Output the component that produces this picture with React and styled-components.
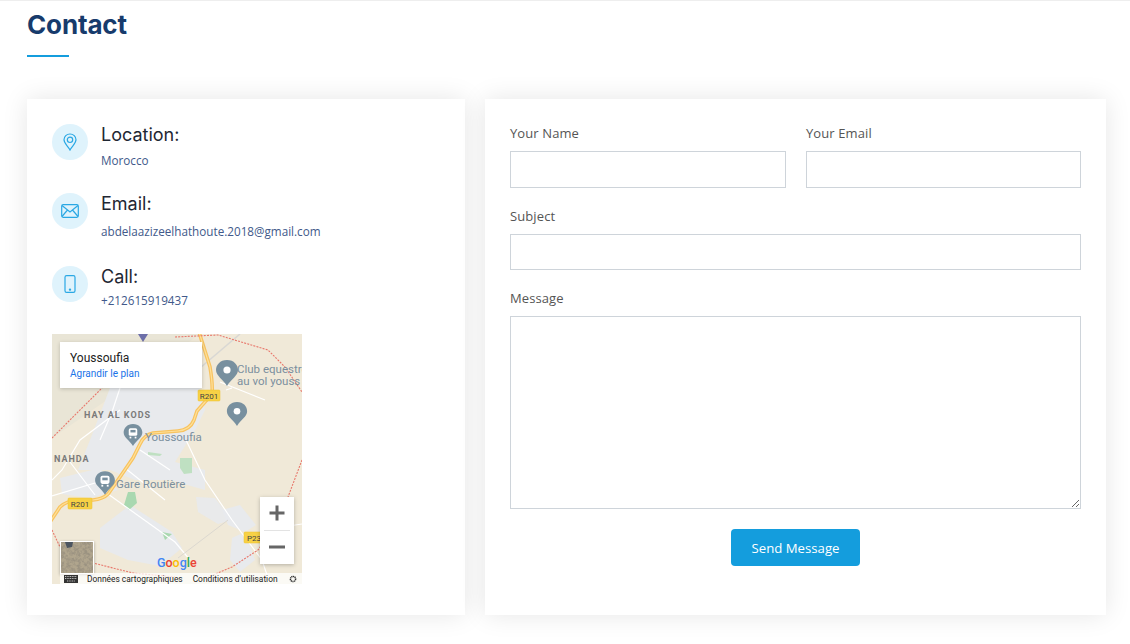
import React from 'react';
import styled, { createGlobalStyle } from 'styled-components';

const GlobalStyle = createGlobalStyle`
  html, body {
    margin: 0;
    padding: 0;
    background: #fff;
    font-family: 'Open Sans', sans-serif;
  }
  * { box-sizing: border-box; }
`;

const Page = styled.section`
  width: 1130px;
  height: 644px;
  overflow: hidden;
  border-top: 1px solid #eee;
  padding: 0 24px 0 27px;
`;

const Title = styled.h2`
  margin: 0;
  padding-top: 7px;
  font-family: 'Inter', sans-serif;
  font-weight: 700;
  font-size: 26px;
  line-height: 34px;
  letter-spacing: -0.15px;
  color: #173b6c;
`;

const Underline = styled.div`
  width: 42px;
  height: 2px;
  margin-top: 13px;
  background: #149ddd;
`;

const Columns = styled.div`
  display: grid;
  grid-template-columns: 438px 621px;
  gap: 20px;
  margin-top: 42px;
`;

const Card = styled.div`
  height: 516px;
  background: #fff;
  box-shadow: 0 0 24px rgba(0, 0, 0, 0.1);
  padding: 25px;
`;

const InfoRow = styled.div`
  display: flex;
  gap: 13px;
  height: ${(props) => props.$height}px;
`;

const IconCircle = styled.div`
  width: 36px;
  height: 36px;
  flex: none;
  border-radius: 50%;
  background: #dff3fc;
  color: #2aa8e4;
  display: flex;
  align-items: center;
  justify-content: center;
`;

const InfoTitle = styled.h4`
  margin: 0;
  font-family: 'Inter', sans-serif;
  font-weight: 400;
  font-size: 18px;
  line-height: 22px;
  color: #1f2733;
`;

const InfoText = styled.p`
  margin: ${(props) => props.$gap}px 0 0;
  font-size: 11.7px;
  line-height: 16px;
  color: #41598a;
`;

const MapFrame = styled.div`
  position: relative;
  width: 250px;
  height: 250px;
  margin-top: -1px;
  overflow: hidden;
  background: #f0e9d8;
  font-family: 'Roboto', sans-serif;
`;

const MapCanvas = styled.svg`
  display: block;
  width: 250px;
  height: 250px;
`;

const MapCard = styled.div`
  position: absolute;
  left: 8px;
  top: 8px;
  width: 142px;
  height: 46px;
  padding: 9px 10px;
  background: #fff;
  box-shadow: 0 1px 4px rgba(0, 0, 0, 0.2);
`;

const MapCardTitle = styled.div`
  font-size: 12px;
  line-height: 14px;
  font-weight: 400;
  color: #222;
`;

const MapCardLink = styled.div`
  margin-top: 3px;
  font-size: 10px;
  line-height: 12px;
  color: #1a73e8;
`;

const ZoomBox = styled.div`
  position: absolute;
  left: 208px;
  top: 163px;
  width: 34px;
  height: 67px;
  background: #fff;
  box-shadow: 0 1px 4px rgba(0, 0, 0, 0.25);
  display: flex;
  flex-direction: column;
  align-items: center;
`;

const ZoomButton = styled.div`
  flex: 1;
  display: flex;
  align-items: center;
  justify-content: center;
  padding-bottom: 2px;
`;

const ZoomDivider = styled.div`
  width: 26px;
  height: 1px;
  background: #e3e3e3;
`;

const Thumb = styled.svg`
  position: absolute;
  left: 8px;
  top: 207px;
  width: 34px;
  height: 33px;
  border: 1px solid #fff;
  box-shadow: 0 1px 3px rgba(0, 0, 0, 0.3);
`;

const MapFooter = styled.div`
  position: absolute;
  left: 8px;
  right: 0;
  bottom: 0;
  height: 11px;
  display: flex;
  align-items: center;
  background: rgba(255, 255, 255, 0.75);
  font-size: 8.4px;
  line-height: 10px;
  color: #222;
  white-space: nowrap;
`;

const KeyboardIcon = styled.svg`
  width: 14px;
  height: 8px;
  margin-left: 4px;
  margin-right: 9px;
`;

const FooterText = styled.span`
  margin-right: ${(props) => props.$gap}px;
`;

const FormGrid = styled.form`
  display: grid;
  grid-template-columns: 276px 275px;
  column-gap: 20px;
  margin: 0;
`;

const Field = styled.div`
  grid-column: ${(props) => (props.$wide ? '1 / -1' : 'auto')};
  margin-bottom: ${(props) => props.$bottom ?? 18}px;
`;

const Label = styled.label`
  display: block;
  height: 27px;
  font-size: 13px;
  line-height: 18px;
  letter-spacing: 0.1px;
  color: #555;
`;

const Input = styled.input`
  display: block;
  width: 100%;
  height: ${(props) => props.$height}px;
  border: 1px solid #ced4da;
  border-radius: 0;
  background: #fff;
`;

const TextArea = styled.textarea`
  display: block;
  width: 100%;
  height: 193px;
  border: 1px solid #ced4da;
  border-radius: 0;
  background: #fff;
  resize: vertical;
`;

const ButtonRow = styled.div`
  grid-column: 1 / -1;
  display: flex;
  justify-content: center;
  margin-top: 2px;
`;

const SendButton = styled.button`
  width: 129px;
  height: 37px;
  border: none;
  border-radius: 4px;
  background: #149ddd;
  color: #fff;
  font-family: 'Open Sans', sans-serif;
  font-size: 13.2px;
  font-weight: 500;
`;

const pinPath = 'M0 -13 C-7 -13 -11 -8 -11 -3 C-11 3 -4 6 0 13 C4 6 11 3 11 -3 C11 -8 7 -13 0 -13 Z';

function Pin({ x, y, scale = 1, transit }) {
  return (
    <g transform={`translate(${x} ${y}) scale(${scale})`}>
      <path d={pinPath} fill="#78909f" />
      {transit ? (
        <g fill="#fff">
          <rect x="-5" y="-8" width="10" height="9" rx="2" />
          <rect x="-3" y="-6" width="6" height="3" fill="#78909f" />
          <rect x="-4" y="2" width="2" height="2" />
          <rect x="2" y="2" width="2" height="2" />
        </g>
      ) : (
        <circle cx="0" cy="-3" r="3.6" fill="#fff" />
      )}
    </g>
  );
}

function Shield({ x, y, w, label }) {
  return (
    <g>
      <rect x={x} y={y} width={w} height="11" rx="1" fill="#f7d145" stroke="#ecc02c" strokeWidth="0.5" />
      <text x={x + w / 2} y={y + 8.5} textAnchor="middle" fontSize="8" fontFamily="Roboto, sans-serif" fill="#444">{label}</text>
    </g>
  );
}

function MapDrawing() {
  const road = 'M50 522 L60 507 Q66 501 78 500 L93 500 Q103 499 108 494 L120 477 L133 458 L140 444 Q144 435 153 433 L178 431 Q190 430 194 420 L197 411 L212 394 Q213 385 210 367 L199 332';
  return (
    <MapCanvas viewBox="52 334 250 250">
      <rect x="52" y="334" width="250" height="250" fill="#f0e9d8" />
      <path d="M52 334 H200 L150 370 L52 438 Z" fill="#e9e5d6" />
      <path d="M110 388 L200 388 L205 410 L195 430 L175 462 L205 470 L205 490 L170 480 L135 480 L110 470 L78 470 L90 440 Z" fill="#e8eaed" />
      <path d="M60 478 L100 468 L118 490 L90 498 L62 494 Z" fill="#e8eaed" />
      <path d="M100 528 L130 505 L172 532 L182 548 L160 566 L128 560 L100 548 Z" fill="#e8eaed" />
      <path d="M222 510 L240 505 L256 525 L245 532 L228 525 Z" fill="#e8eaed" />
      <path d="M196 497 L215 498 L232 520 L218 524 L198 512 Z" fill="#e8eaed" opacity="0.9" />
      <path d="M232 538 L245 532 L255 560 L240 572 L230 560 Z" fill="#e8eaed" />
      <path d="M180 458 L192 458 L192 473 L184 474 L180 468 Z" fill="#bfe0c2" />
      <path d="M128 492 L135 492 L137 503 L129 510 L124 505 Z" fill="#a9d8b0" />
      <path d="M148 452 L162 454 L160 456 L148 455 Z" fill="#bfe0c2" />
      <path d="M162 532 L172 534 L165 540 Z" fill="#a9d8b0" />
      <g fill="none" stroke="#fff" strokeWidth="1.2">
        <path d="M108 494 L175 542 L190 560" />
        <path d="M186 440 L205 480 L232 520 L262 560 L270 584" />
        <path d="M120 410 L80 440 L62 470 L52 480" />
        <path d="M52 496 L105 480 M70 462 L95 495 M125 468 L165 500 M140 450 L170 470" />
        <path d="M220 382 L245 392 L265 400 M226 390 L232 388" />
        <path d="M262 530 L302 524" />
        <path d="M120 388 L112 412 L100 440" />
      </g>
      <path d="M240 334 L180 385" stroke="#d9d8d4" strokeWidth="1.5" fill="none" />
      <path d="M178 558 L228 520" stroke="#dcd8d0" strokeWidth="1" fill="none" />
      <path d={road} fill="none" stroke="#f8c35f" strokeWidth="3.6" />
      <path d={road} fill="none" stroke="#fee09a" strokeWidth="1.2" />
      <g fill="none" stroke="#e8786c" strokeWidth="1.1" strokeDasharray="2 1.2">
        <path d="M52 438 L102 388" />
        <path d="M175 337 L218 335 L268 350 L285 367 L302 392" />
        <path d="M302 460 L288 497 L272 530 L258 550 L232 567 L208 577" />
        <path d="M52 530 L60 547 L93 563 L133 573 L175 577" />
      </g>
      <path d="M138 334 L148 334 L143 342 Z" fill="#6d6fa8" />
      <Shield x={198} y={390} w={22} label="R201" />
      <Shield x={68} y={498} w={24} label="R201" />
      <Shield x={244} y={532} w={20} label="P23" />
      <Pin x={227} y={373} />
      <Pin x={237} y={414} scale={0.92} />
      <Pin x={133} y={435} scale={0.85} transit />
      <Pin x={105} y={483} scale={0.9} transit />
      <g fontFamily="Roboto, sans-serif" fill="#7b8f9e" fontSize="11.5">
        <text x="237" y="373">Club equestre</text>
        <text x="237" y="385">au vol youss</text>
        <text x="145" y="441">Youssoufia</text>
        <text x="116" y="488">Gare Routière</text>
      </g>
      <g fontFamily="Roboto, sans-serif" fill="#7a7a7a" fontSize="9" fontWeight="700" letterSpacing="1">
        <text x="84" y="418">HAY AL KODS</text>
        <text x="54" y="462">NAHDA</text>
      </g>
      <text x="157" y="567" fontFamily="Roboto, sans-serif" fontSize="12.5" fontWeight="500">
        <tspan fill="#4285f4">G</tspan>
        <tspan fill="#ea4335">o</tspan>
        <tspan fill="#fbbc05">o</tspan>
        <tspan fill="#4285f4">g</tspan>
        <tspan fill="#34a853">l</tspan>
        <tspan fill="#ea4335">e</tspan>
      </text>
    </MapCanvas>
  );
}

function PinIcon() {
  return (
    <svg width="16" height="18" viewBox="0 0 16 18" fill="none" stroke="currentColor" strokeWidth="1.2">
      <path d="M8 17 C6 13 2 10.5 2 6.8 C2 3.4 4.7 1 8 1 C11.3 1 14 3.4 14 6.8 C14 10.5 10 13 8 17 Z" />
      <circle cx="8" cy="6.8" r="2.7" />
    </svg>
  );
}

function MailIcon() {
  return (
    <svg width="18" height="14" viewBox="0 0 18 14" fill="none" stroke="currentColor" strokeWidth="1.2">
      <rect x="0.7" y="0.7" width="16.6" height="12.6" rx="1.5" />
      <path d="M1 1.5 L9 8 L17 1.5 M1 12.5 L6.5 6 M17 12.5 L11.5 6" />
    </svg>
  );
}

function PhoneIcon() {
  return (
    <svg width="12" height="18" viewBox="0 0 12 18" fill="none" stroke="currentColor" strokeWidth="1.2">
      <rect x="1" y="0.7" width="10" height="16.6" rx="1.6" />
      <circle cx="6" cy="14.6" r="0.6" fill="currentColor" />
    </svg>
  );
}

function SatelliteThumb() {
  return (
    <Thumb viewBox="0 0 32 31">
      <filter id="ground" x="0" y="0" width="100%" height="100%">
        <feTurbulence type="fractalNoise" baseFrequency="0.3" numOctaves="3" seed="7" />
        <feColorMatrix values="0 0 0 0 0.33  0 0 0 0 0.29  0 0 0 0 0.22  3.2 0 0 0 -1.2" />
      </filter>
      <rect width="32" height="31" fill="#b0a58d" />
      <rect width="32" height="31" filter="url(#ground)" />
      <path d="M4 0 H12 L11 5 L6 6 Z" fill="#4c5560" />
    </Thumb>
  );
}

export default function App() {
  return (
    <Page>
      <GlobalStyle />
      <Title>Contact</Title>
      <Underline />
      <Columns>
        <Card>
          <InfoRow $height={69}>
            <IconCircle><PinIcon /></IconCircle>
            <div>
              <InfoTitle>Location:</InfoTitle>
              <InfoText $gap={6}>Morocco</InfoText>
            </div>
          </InfoRow>
          <InfoRow $height={73}>
            <IconCircle><MailIcon /></IconCircle>
            <div>
              <InfoTitle>Email:</InfoTitle>
              <InfoText $gap={8}>abdelaazizeelhathoute.2018@gmail.com</InfoText>
            </div>
          </InfoRow>
          <InfoRow $height={69}>
            <IconCircle><PhoneIcon /></IconCircle>
            <div>
              <InfoTitle>Call:</InfoTitle>
              <InfoText $gap={4}>+212615919437</InfoText>
            </div>
          </InfoRow>
          <MapFrame>
            <MapDrawing />
            <MapCard>
              <MapCardTitle>Youssoufia</MapCardTitle>
              <MapCardLink>Agrandir le plan</MapCardLink>
            </MapCard>
            <ZoomBox>
              <ZoomButton>
                <svg width="16" height="16" viewBox="0 0 16 16"><path d="M6.5 0.5 H9.5 V6.5 H15.5 V9.5 H9.5 V15.5 H6.5 V9.5 H0.5 V6.5 H6.5 Z" fill="#666" /></svg>
              </ZoomButton>
              <ZoomDivider />
              <ZoomButton>
                <svg width="16" height="4" viewBox="0 0 16 4"><rect y="0.5" width="16" height="3" fill="#666" /></svg>
              </ZoomButton>
            </ZoomBox>
            <SatelliteThumb />
            <MapFooter>
              <KeyboardIcon viewBox="0 0 14 8">
                <rect width="14" height="8" fill="#333" />
                <path d="M1 1.5 H13 M1 3.5 H13 M3 6 H11" stroke="#fff" strokeWidth="0.7" strokeDasharray="1 0.7" />
              </KeyboardIcon>
              <FooterText $gap={10}>Données cartographiques</FooterText>
              <FooterText $gap={11}>Conditions d'utilisation</FooterText>
              <svg width="8" height="8" viewBox="0 0 8 8"><circle cx="4" cy="4" r="2.6" fill="none" stroke="#333" strokeWidth="1.5" strokeDasharray="1.2 0.5" /></svg>
            </MapFooter>
          </MapFrame>
        </Card>
        <Card>
          <FormGrid>
            <Field $bottom={19}>
              <Label>Your Name</Label>
              <Input $height={37} />
            </Field>
            <Field $bottom={19}>
              <Label>Your Email</Label>
              <Input $height={37} />
            </Field>
            <Field $wide $bottom={19}>
              <Label>Subject</Label>
              <Input $height={36} />
            </Field>
            <Field $wide $bottom={18}>
              <Label>Message</Label>
              <TextArea />
            </Field>
            <ButtonRow>
              <SendButton type="button">Send Message</SendButton>
            </ButtonRow>
          </FormGrid>
        </Card>
      </Columns>
    </Page>
  );
}
